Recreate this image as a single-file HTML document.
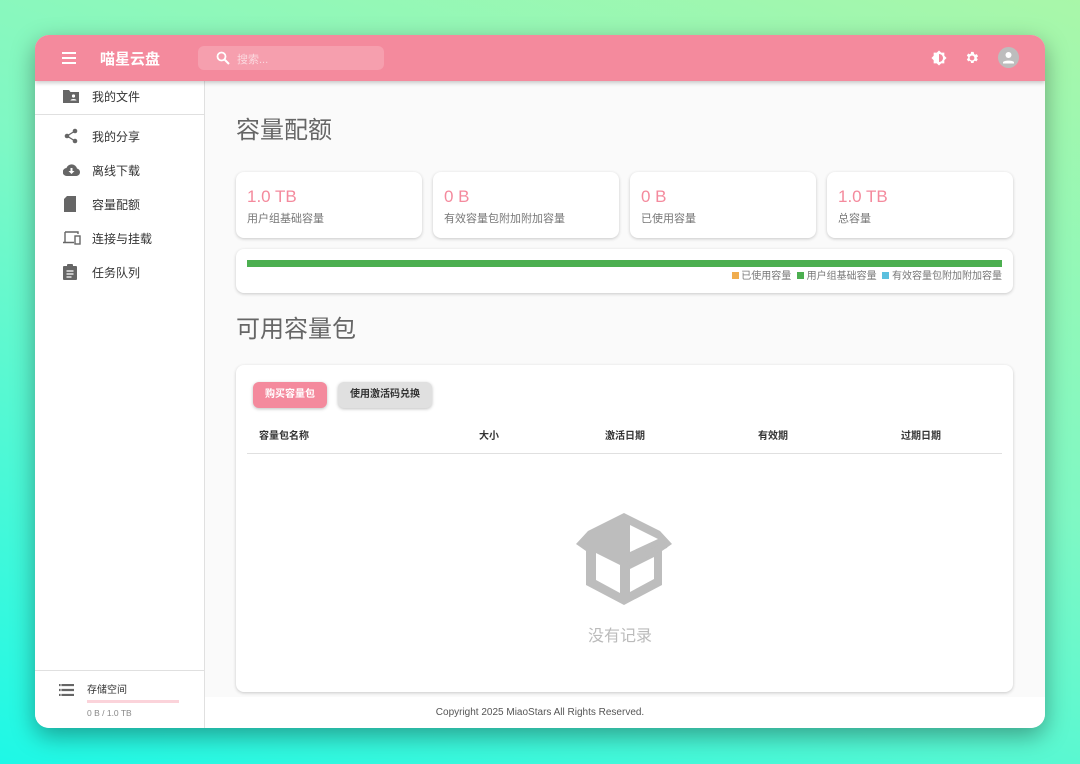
<!DOCTYPE html>
<html><head><meta charset="utf-8"><style>
*{box-sizing:border-box;margin:0;padding:0}
body{width:1080px;height:764px;overflow:hidden;font-family:"Liberation Sans","Noto Sans CJK SC",sans-serif;background:linear-gradient(200deg,#a9f7a9 0%,#7ff8c4 45%,#1ef8e6 100%);position:relative}
.win{position:absolute;left:35px;top:35px;width:1010px;height:693px;border-radius:14px;overflow:hidden;background:#fafafa;box-shadow:0 8px 24px rgba(0,0,0,.35)}
.hdr{position:absolute;left:0;top:0;width:100%;height:46px;background:#f48a9d;box-shadow:0 2px 4px rgba(0,0,0,.2);z-index:2}
.side{position:absolute;left:0;top:46px;width:170px;bottom:0;background:#fff;border-right:1px solid #e0e0e0}
.it{position:absolute;left:0;height:20px;display:flex;align-items:center;font-size:12px;color:#333}
.it svg{position:absolute;left:28px}
.it span{position:absolute;left:57px;white-space:nowrap}
.card{position:absolute;background:#fff;border-radius:8px;box-shadow:0 1px 3px rgba(0,0,0,.2)}
.big{font-size:17px;color:#f48a9d;position:absolute;left:11px;top:15px}
.sub{font-size:11px;color:#777;position:absolute;left:11px;top:38px;white-space:nowrap}
h2{position:absolute;font-weight:normal;font-size:24px;color:#666}
.th{position:absolute;top:392px;font-size:10px;color:#333;font-weight:bold}
</style></head><body>
<div class="win">
<div class="hdr">
<svg style="position:absolute;left:27px;top:17px" width="14" height="12" viewBox="0 0 14 12"><path d="M0 1h14M0 6h14M0 11h14" stroke="#fff" stroke-width="2"/></svg>
<div style="position:absolute;left:65px;top:13px;color:#fff;font-size:15px;font-weight:bold">喵星云盘</div>
<div style="position:absolute;left:163px;top:11px;width:186px;height:24px;border-radius:6px;background:rgba(255,255,255,.18)"></div>
<svg style="position:absolute;left:181px;top:16px" width="14" height="14" viewBox="0 0 14 14"><circle cx="5.5" cy="5.5" r="4" fill="none" stroke="#fff" stroke-width="1.8"/><path d="M8.5 8.5L13 13" stroke="#fff" stroke-width="2"/></svg>
<div style="position:absolute;left:202px;top:16px;color:rgba(255,255,255,.6);font-size:11px">搜索...</div>
<svg style="position:absolute;left:896px;top:15px" width="16" height="16" viewBox="0 0 24 24"><path fill="#fff" d="M20 8.69V4h-4.69L12 .69 8.69 4H4v4.69L.69 12 4 15.31V20h4.69L12 23.31 15.31 20H20v-4.69L23.31 12 20 8.69zM12 18V6c3.31 0 6 2.69 6 6s-2.69 6-6 6z"/></svg>
<svg style="position:absolute;left:929px;top:15px" width="16" height="16" viewBox="0 0 24 24"><path fill="#fff" d="M19.14 12.94c.04-.3.06-.61.06-.94s-.02-.64-.07-.94l2.030-1.58-1.92-3.32-2.39.96c-.5-.38-1.03-.7-1.62-.94L14.4 2.81h-3.840l-.36 2.54c-.59.24-1.13.57-1.62.94l-2.39-.96-1.92 3.32 2.03 1.58c-.05.3-.09.63-.09.94s.02.64.07.94l-2.03 1.58 1.92 3.32 2.39-.96c.5.38 1.03.7 1.62.94l.36 2.54h3.84l.36-2.54c.59-.24 1.13-.56 1.62-.94l2.39.96 1.92-3.32-2.03-1.58zM12 15.6c-1.98 0-3.6-1.62-3.6-3.6s1.62-3.6 3.6-3.6 3.6 1.62 3.6 3.6-1.62 3.6-3.6 3.6z"/></svg>
<svg style="position:absolute;left:963px;top:12px" width="21" height="21" viewBox="0 0 21 21"><circle cx="10.5" cy="10.5" r="10.5" fill="#bdbdbd"/><circle cx="10.5" cy="8" r="3" fill="#fff"/><path d="M5 15.5c0-2.5 11-2.5 11 0v1H5z" fill="#fff"/></svg>
</div>
<div class="side">
<div class="it" style="top:5px"><svg width="16" height="14" viewBox="0 0 16 14"><path d="M0 1h6l1.5 2H16v11H0z" fill="#666"/><circle cx="10.5" cy="7" r="1.6" fill="#fff"/><path d="M7.5 11.5c0-2 6-2 6 0z" fill="#fff"/></svg><span>我的文件</span></div>
<div style="position:absolute;left:0;top:33px;width:170px;height:1px;background:#e0e0e0"></div>
<div class="it" style="top:45px"><svg width="16" height="16" viewBox="0 0 16 16"><circle cx="12" cy="3" r="2.3" fill="#666"/><circle cx="4" cy="8" r="2.3" fill="#666"/><circle cx="12" cy="13" r="2.3" fill="#666"/><path d="M12 3L4 8l8 5" stroke="#666" stroke-width="1.3" fill="none"/></svg><span>我的分享</span></div>
<div class="it" style="top:79px"><svg width="17" height="13" viewBox="0 0 17 13"><path d="M4 12a4 4 0 0 1-.5-8A5.5 5.5 0 0 1 14 4.5 3.8 3.8 0 0 1 13.5 12z" fill="#666"/><path d="M7.5 4h2v3h2l-3 3-3-3h2z" fill="#fff"/></svg><span>离线下载</span></div>
<div class="it" style="top:113px"><svg width="14" height="16" viewBox="0 0 14 16"><path d="M4 0h9v16H1V3z" fill="#666"/></svg><span>容量配额</span></div>
<div class="it" style="top:147px"><svg width="18" height="14" viewBox="0 0 18 14"><path d="M2 1h13v2M2 1v10M0 11.5h11" stroke="#666" stroke-width="1.4" fill="none"/><rect x="12" y="5" width="5" height="8" fill="none" stroke="#666" stroke-width="1.4"/></svg><span>连接与挂载</span></div>
<div class="it" style="top:181px"><svg width="14" height="16" viewBox="0 0 14 16"><rect x="0" y="2" width="14" height="14" rx="1" fill="#666"/><rect x="4" y="0" width="6" height="3" rx="1" fill="#666"/><path d="M3.5 7h7M3.5 10h7M3.5 13h5" stroke="#fff" stroke-width="1.3"/></svg><span>任务队列</span></div>
<div style="position:absolute;left:0;top:589px;width:170px;height:1px;background:#e0e0e0"></div>
<svg style="position:absolute;left:24px;top:603px" width="15" height="12" viewBox="0 0 15 12"><path d="M0 1h15M0 6h15M0 11h15" stroke="#666" stroke-width="2.2"/><path d="M2 0v12" stroke="#fff" stroke-width=".8"/></svg>
<div style="position:absolute;left:52px;top:600px;font-size:10px;color:#333">存储空间</div>
<div style="position:absolute;left:52px;top:619px;width:92px;height:3px;background:#fbd3da"></div>
<div style="position:absolute;left:52px;top:627px;font-size:8.5px;color:#888">0 B / 1.0 TB</div>
</div>
<h2 style="left:201px;top:75px">容量配额</h2>
<div class="card" style="left:201px;top:137px;width:186px;height:66px"><div class="big">1.0 TB</div><div class="sub">用户组基础容量</div></div>
<div class="card" style="left:398px;top:137px;width:186px;height:66px"><div class="big">0 B</div><div class="sub">有效容量包附加附加容量</div></div>
<div class="card" style="left:595px;top:137px;width:186px;height:66px"><div class="big">0 B</div><div class="sub">已使用容量</div></div>
<div class="card" style="left:792px;top:137px;width:186px;height:66px"><div class="big">1.0 TB</div><div class="sub">总容量</div></div>
<div class="card" style="left:201px;top:214px;width:777px;height:44px">
<div style="position:absolute;left:11px;top:11px;width:755px;height:7px;background:#4caf50"></div>
<div style="position:absolute;right:11px;top:18px;font-size:10px;color:#777;white-space:nowrap"><span style="display:inline-block;width:7px;height:7px;background:#f0ad4e"></span> 已使用容量 &nbsp;<span style="display:inline-block;width:7px;height:7px;background:#4caf50"></span> 用户组基础容量 &nbsp;<span style="display:inline-block;width:7px;height:7px;background:#5bc0de"></span> 有效容量包附加附加容量</div>
</div>
<h2 style="left:201px;top:274px">可用容量包</h2>
<div class="card" style="left:201px;top:330px;width:777px;height:327px">
<div style="position:absolute;left:17px;top:17px;width:74px;height:26px;border-radius:6px;background:#f48a9d;color:#fff;font-size:10px;font-weight:bold;text-align:center;line-height:26px;box-shadow:0 1px 3px rgba(0,0,0,.25)">购买容量包</div>
<div style="position:absolute;left:102px;top:17px;width:94px;height:26px;border-radius:6px;background:#e0e0e0;color:#333;font-size:10px;font-weight:bold;text-align:center;line-height:26px;box-shadow:0 1px 3px rgba(0,0,0,.25)">使用激活码兑换</div>
<div style="position:absolute;left:11px;top:88px;width:755px;height:1px;background:#e0e0e0"></div>
<svg style="position:absolute;left:338px;top:146px" width="100" height="96" viewBox="0 0 100 96"><path d="M50 2L86 20 98 33 88 40V74L50 94 12 74V40L2 33 14 20z" fill="#bdbdbd"/><path d="M22 42L46 54V82L22 69z" fill="#fff"/><path d="M56 14L84 28 56 41z" fill="#fff"/><path d="M56 58L80 46V68L56 81z" fill="#fff"/><path d="M54 52L92 34" stroke="#bdbdbd" stroke-width="6"/></svg>
<div style="position:absolute;left:352px;top:257px;font-size:16px;color:#bbb">没有记录</div>
</div>
<div class="th" style="left:224px">容量包名称</div><div class="th" style="left:444px">大小</div><div class="th" style="left:570px">激活日期</div><div class="th" style="left:723px">有效期</div><div class="th" style="left:866px">过期日期</div>
<div style="position:absolute;left:170px;top:662px;right:0;bottom:0;background:#fff"></div>
<div style="position:absolute;left:0;width:1010px;top:672px;font-size:10px;color:#555;text-align:center">Copyright 2025 MiaoStars All Rights Reserved.</div>
</div>
</body></html>
